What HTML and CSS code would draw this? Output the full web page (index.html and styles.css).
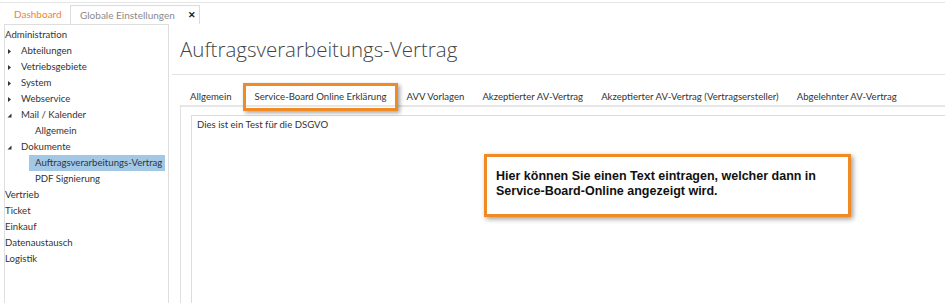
FILE: index.html
```html
<!DOCTYPE html>
<html lang="de">
<head>
  <meta charset="UTF-8" />
  <title>Globale Einstellungen</title>
  <link rel="stylesheet" href="styles.css">
</head>
<body>
  <div class="doc-tabs">
    <div class="doc-tab home">Dashboard</div>
    <div class="doc-tab active">Globale Einstellungen <span class="close">&#x2715;</span></div>
  </div>

  <div class="main">
    <ul class="tree">
      <li class="root">Administration</li>
      <li class="lvl1"><svg class="arrow" width="5" height="7" viewBox="0 0 5 7"><path d="M1 1L4 3.5L1 6Z" fill="#333"/></svg>Abteilungen</li>
      <li class="lvl1"><svg class="arrow" width="5" height="7" viewBox="0 0 5 7"><path d="M1 1L4 3.5L1 6Z" fill="#333"/></svg>Vetriebsgebiete</li>
      <li class="lvl1"><svg class="arrow" width="5" height="7" viewBox="0 0 5 7"><path d="M1 1L4 3.5L1 6Z" fill="#333"/></svg>System</li>
      <li class="lvl1"><svg class="arrow" width="5" height="7" viewBox="0 0 5 7"><path d="M1 1L4 3.5L1 6Z" fill="#333"/></svg>Webservice</li>
      <li class="lvl1"><svg class="arrow" width="5" height="7" viewBox="0 0 5 7"><path d="M4.5 1.5L4.5 5.5L0.5 5.5Z" fill="#333"/></svg>Mail / Kalender</li>
      <li class="lvl2">Allgemein</li>
      <li class="lvl1"><svg class="arrow" width="5" height="7" viewBox="0 0 5 7"><path d="M4.5 1.5L4.5 5.5L0.5 5.5Z" fill="#333"/></svg>Dokumente</li>
      <li class="lvl2"><span class="selected">Auftragsverarbeitungs-Vertrag</span></li>
      <li class="lvl2">PDF Signierung</li>
      <li class="root">Vertrieb</li>
      <li class="root">Ticket</li>
      <li class="root">Einkauf</li>
      <li class="root">Datenaustausch</li>
      <li class="root">Logistik</li>
    </ul>

    <div class="panel">
      <h1 class="title">Auftragsverarbeitungs-Vertrag</h1>
      <div class="tabs">
        <div class="tab">Allgemein</div>
        <div class="tab marked">Service-Board Online Erklärung</div>
        <div class="tab">AVV Vorlagen</div>
        <div class="tab">Akzeptierter AV-Vertrag</div>
        <div class="tab">Akzeptierter AV-Vertrag (Vertragsersteller)</div>
        <div class="tab">Abgelehnter AV-Vertrag</div>
      </div>
      <div class="tab-body">
        <div class="editor">Dies ist ein Test für die DSGVO</div>
      </div>
    </div>
  </div>

  <div class="callout">Hier können Sie einen Text eintragen, welcher dann in Service-Board-Online angezeigt wird.</div>
</body>
</html>
```

FILE: styles.css
```css
* {
  box-sizing: border-box;
  margin: 0;
  padding: 0;
}
html, body {
  height: 100%;
  overflow: hidden;
}
body {
  font-family: Lato, "Open Sans", sans-serif;
  font-size: 9.6px;
  color: #333;
  background: #fff;
  position: relative;
}

/* document tabs */
.doc-tabs {
  display: flex;
  height: 22px;
  margin-top: 2px;
  border-top: 1px solid #e6e6e6;
  padding-left: 4px;
  align-items: flex-end;
}
.doc-tab {
  height: 19px;
  line-height: 18px;
  font-size: 10px;
}
.doc-tab.home {
  color: #f28232;
  width: 66px;
  padding-left: 10px;
}
.doc-tab.active {
  color: #8a8a8a;
  width: 130px;
  padding-left: 9px;
  border: 1px solid #dcdcdc;
  border-bottom: none;
  position: relative;
}
.close {
  position: absolute;
  right: 3px;
  top: 0;
  color: #222;
  font-size: 9px;
  font-weight: bold;
}

.main {
  display: flex;
  height: calc(100% - 24px);
}

/* left tree */
.tree {
  list-style: none;
  width: 165px;
  margin-left: 4px;
  border-left: 1px solid #dedede;
  border-right: 1px solid #dedede;
  border-top: 1px solid #dedede;
  padding-top: 2px;
  flex-shrink: 0;
}
.tree li {
  height: 16px;
  line-height: 16px;
  white-space: nowrap;
  display: flex;
  align-items: center;
}
.tree .root {
  padding-left: 0;
}
.tree .lvl1 {
  padding-left: 2px;
}
.tree .lvl1 .arrow {
  margin-right: 9px;
}
.tree .lvl2 {
  padding-left: 30px;
}
.tree .selected {
  background: #a3c8e6;
  margin-left: -6px;
  padding-left: 6px;
  width: 136px;
  display: block;
  overflow: hidden;
}

/* right panel */
.panel {
  flex: 1;
  padding-left: 3px;
  display: flex;
  flex-direction: column;
  min-width: 0;
}
.title {
  font-family: "Open Sans", sans-serif;
  font-weight: 300;
  font-size: 20.5px;
  color: #444;
  height: 51px;
  line-height: 50px;
  padding-left: 8px;
  border-bottom: 1px solid #e3e3e3;
  white-space: nowrap;
}
.tabs {
  display: flex;
  height: 30px;
  padding-left: 9px;
}
.tab {
  height: 30px;
  padding: 12px 9px 0 9px;
  line-height: 20px;
  white-space: nowrap;
}
.tab:first-child {
  padding-right: 11px;
}
.tab.marked {
  position: relative;
  padding: 12px 11px 0 12px;
}
.tab.marked::after {
  content: "";
  position: absolute;
  left: 0;
  right: 0;
  top: 8px;
  bottom: -6px;
  border: 3px solid #f08a24;
  box-shadow: 2px 2px 4px rgba(0, 0, 0, 0.35);
}
.tab-body {
  flex: 1;
  margin-left: 8px;
  border-left: 1px solid #e0e0e0;
  border-top: 2px solid #e6e6e6;
  padding: 8px 0 0 10px;
  display: flex;
}
.editor {
  flex: 1;
  border-left: 1px solid #dcdcdc;
  border-top: 1px solid #dcdcdc;
  padding: 3px 5px;
}

/* annotation */
.callout {
  position: absolute;
  left: 484px;
  top: 154px;
  width: 367px;
  height: 63px;
  border: 3px solid #f08a24;
  box-shadow: 2px 2px 5px rgba(0, 0, 0, 0.4);
  background: #fff;
  padding: 12px 10px 0 9px;
  font-family: "Liberation Sans", Arial, sans-serif;
  font-weight: bold;
  font-size: 12.5px;
  line-height: 15px;
  color: #111;
}
```
